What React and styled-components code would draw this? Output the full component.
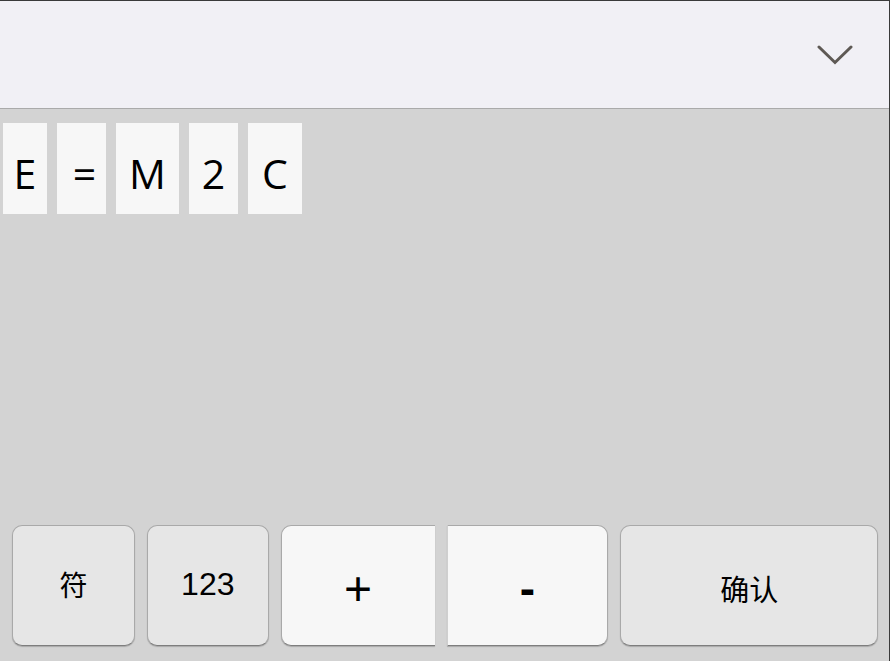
import React from "react";
import styled, { createGlobalStyle } from "styled-components";

const Global = createGlobalStyle`
  html, body { margin: 0; padding: 0; }
  body { width: 890px; height: 661px; overflow: hidden; background: #d3d3d3; }
  #root { width: 890px; height: 661px; }
`;

const Screen = styled.div`
  width: 890px;
  height: 661px;
  box-sizing: border-box;
  display: flex;
  flex-direction: column;
  background: #d3d3d3;
  border-top: 1px solid #3a3a3a;
  border-right: 1px solid #3a3a3a;
  font-family: "Open Sans", "Noto Sans CJK SC", sans-serif;
`;

const TopBar = styled.div`
  height: 107px;
  flex: none;
  background: #f1f0f5;
  border-bottom: 1px solid #aaaaaa;
  display: flex;
  align-items: center;
  justify-content: flex-end;
  padding-right: 36px;
`;

const Chevron = styled.svg`
  width: 36px;
  height: 22px;
  margin-top: 1px;
`;

const Body = styled.div`
  flex: 1;
  display: flex;
  flex-direction: column;
  padding: 14px 0 15px;
`;

const TileRow = styled.div`
  display: flex;
  gap: 10px;
  padding-left: 3px;
`;

const Tile = styled.div`
  width: ${(p) => p.$w}px;
  margin-right: ${(p) => p.$mr || 0}px;
  height: 91px;
  background: #f7f7f7;
  display: flex;
  align-items: center;
  justify-content: center;
  padding-top: 9px;
  padding-left: ${(p) => p.$pl || 0}px;
  box-sizing: border-box;
  font-family: "Open Sans", sans-serif;
  font-size: 41px;
  color: #000;
`;

const KeyRow = styled.div`
  margin-top: auto;
  display: flex;
  padding: 0 11px 0 12px;
  gap: 12px;
`;

const Key = styled.div`
  width: ${(p) => p.$w}px;
  height: 121px;
  box-sizing: border-box;
  background: ${(p) => (p.$light ? "#f7f7f7" : "#e6e6e6")};
  border: 1px solid #a9a9a9;
  border-bottom-color: #7e7e7e;
  box-shadow: 0 1px 1px rgba(0, 0, 0, 0.2);
  border-radius: ${(p) =>
    p.$side === "left"
      ? "10px 0 0 10px"
      : p.$side === "right"
      ? "0 10px 10px 0"
      : "10px"};
  ${(p) => (p.$side === "left" ? "border-right: none;" : "")}
  ${(p) => (p.$side === "right" ? "border-left-color: #cfcfcf;" : "")}
  display: flex;
  align-items: center;
  justify-content: center;
  color: #000;
`;

const KeyLabel = styled.span`
  font-family: ${(p) => (p.$cjk ? '"Noto Sans CJK SC", sans-serif' : '"Liberation Sans", Arial, sans-serif')};
  font-size: ${(p) => p.$size}px;
  font-weight: ${(p) => (p.$bold ? 700 : 400)};
  line-height: 1;
  transform: translateY(${(p) => p.$dy || 0}px);
`;

const tiles = [
  { t: "E", w: 44 },
  { t: "=", w: 49, pl: 6 },
  { t: "M", w: 63 },
  { t: "2", w: 49 },
  { t: "C", w: 54 },
];

export default function App() {
  return (
    <>
      <Global />
      <Screen>
        <TopBar>
          <Chevron viewBox="0 0 36 22">
            <polyline
              points="2,3 18,18.5 34,3"
              fill="none"
              stroke="#5e5954"
              strokeWidth="3"
              strokeLinecap="round"
              strokeLinejoin="miter"
            />
          </Chevron>
        </TopBar>
        <Body>
          <TileRow>
            {tiles.map((x, i) => (
              <Tile key={i} $w={x.w} $pl={x.pl}>
                {x.t}
              </Tile>
            ))}
          </TileRow>
          <KeyRow>
            <Key $w={123}>
              <KeyLabel $cjk $size={28} $dy={-2}>符</KeyLabel>
            </Key>
            <Key $w={122}>
              <KeyLabel $size={32} $dy={-2}>123</KeyLabel>
            </Key>
            <Key $w={154} $light $side="left">
              <KeyLabel $size={48} $dy={3}>+</KeyLabel>
            </Key>
            <Key $w={162} $light $side="right">
              <KeyLabel $size={46} $bold $dy={2}>-</KeyLabel>
            </Key>
            <Key $w={258}>
              <KeyLabel $cjk $size={29} $dy={3}>确认</KeyLabel>
            </Key>
          </KeyRow>
        </Body>
      </Screen>
    </>
  );
}
